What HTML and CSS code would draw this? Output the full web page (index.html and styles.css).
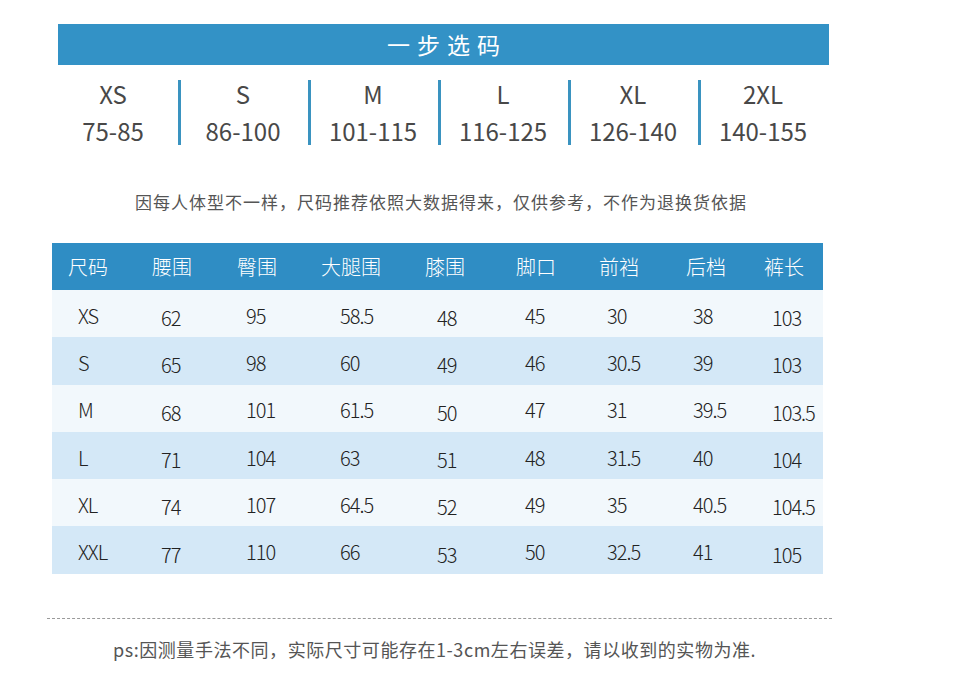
FILE: index.html
```html
<!DOCTYPE html>
<html lang="zh">
<head>
<meta charset="utf-8">
<link rel="stylesheet" href="styles.css">
</head>
<body>
<div class="page">
  <div class="banner">一步选码</div>
  <div class="sizes">
    <div class="size"><span>XS</span><span>75-85</span></div>
    <div class="size"><span>S</span><span>86-100</span></div>
    <div class="size"><span>M</span><span>101-115</span></div>
    <div class="size"><span>L</span><span>116-125</span></div>
    <div class="size"><span>XL</span><span>126-140</span></div>
    <div class="size"><span>2XL</span><span>140-155</span></div>
  </div>
  <p class="note">因每人体型不一样，尺码推荐依照大数据得来，仅供参考，不作为退换货依据</p>
  <div class="table">
    <div class="row head"><span>尺码</span><span>腰围</span><span>臀围</span><span>大腿围</span><span>膝围</span><span>脚口</span><span>前裆</span><span>后档</span><span>裤长</span></div>
    <div class="row light"><span>XS</span><span>62</span><span>95</span><span>58.5</span><span>48</span><span>45</span><span>30</span><span>38</span><span>103</span></div>
    <div class="row dark"><span>S</span><span>65</span><span>98</span><span>60</span><span>49</span><span>46</span><span>30.5</span><span>39</span><span>103</span></div>
    <div class="row light"><span>M</span><span>68</span><span>101</span><span>61.5</span><span>50</span><span>47</span><span>31</span><span>39.5</span><span>103.5</span></div>
    <div class="row dark"><span>L</span><span>71</span><span>104</span><span>63</span><span>51</span><span>48</span><span>31.5</span><span>40</span><span>104</span></div>
    <div class="row light"><span>XL</span><span>74</span><span>107</span><span>64.5</span><span>52</span><span>49</span><span>35</span><span>40.5</span><span>104.5</span></div>
    <div class="row dark"><span>XXL</span><span>77</span><span>110</span><span>66</span><span>53</span><span>50</span><span>32.5</span><span>41</span><span>105</span></div>
  </div>
  <div class="rule"></div>
  <p class="ps">ps:因测量手法不同，实际尺寸可能存在1-3cm左右误差，请以收到的实物为准.</p>
</div>
</body>
</html>
```
FILE: styles.css
```css
* { box-sizing: border-box; }
html, body { margin: 0; padding: 0; background: #fff; }
body {
  width: 976px;
  height: 697px;
  overflow: hidden;
  font-family: "Noto Sans CJK SC", "Noto Sans", sans-serif;
}
.page {
  padding-top: 24px;
  display: flex;
  flex-direction: column;
}
.banner {
  margin-left: 58px;
  width: 771px;
  height: 41px;
  background: #3392c6;
  color: #fff;
  font-size: 23px;
  letter-spacing: 7px;
  text-indent: 7px;
  line-height: 41px;
  text-align: center;
}
.sizes {
  margin-top: 15px;
  margin-left: 48px;
  display: grid;
  grid-template-columns: repeat(6, 130px);
  grid-template-rows: 65px;
  height: 65px;
}
.size {
  display: flex;
  flex-direction: column;
  align-items: center;
  font-size: 24px;
  color: #484848;
  height: 65px;
}
.size span:first-child { line-height: 28px; }
.size span:last-child { line-height: 37px; margin-top: 4px; }
.size + .size {
  border-left: 3px solid #3a93c0;
  padding-right: 3px;
}
.note {
  margin: 45px 0 0;
  text-align: center;
  font-size: 17px;
  letter-spacing: 1px;
  line-height: 24px;
  color: #555;
  padding-right: 94px;
}
.table {
  margin-top: 29px;
  margin-left: 52px;
  width: 771px;
  display: flex;
  flex-direction: column;
}
.row {
  display: grid;
  grid-template-columns: 90px 85px 84px 104px 91px 83px 87px 78px 69px;
  height: 47.3px;
  align-items: center;
  font-size: 20px;
  font-weight: 300;
  letter-spacing: -1px;
  color: #222;
}
.row span { padding-top: 3px; }
.row span:nth-child(1) { padding-left: 26px; }
.row span:nth-child(2) { padding-left: 19px; padding-top: 8px; }
.row span:nth-child(3) { padding-left: 19px; }
.row span:nth-child(4) { padding-left: 29px; }
.row span:nth-child(5) { padding-left: 22px; padding-top: 8px; }
.row span:nth-child(6) { padding-left: 19px; }
.row span:nth-child(7) { padding-left: 18px; }
.row span:nth-child(8) { padding-left: 17px; }
.row span:nth-child(9) { padding-left: 18px; padding-top: 8px; }
.row.head {
  height: 47px;
  background: #2f8dc4;
  color: #fff;
  letter-spacing: 0;
  font-weight: 300;
}
.row.head span { padding-left: 10px; padding-top: 0; }
.row.head span:first-child { padding-left: 16px; }
.row.light { background: #f2f8fc; }
.row.dark { background: #d4e8f7; }
.rule {
  margin-top: 44px;
  margin-left: 47px;
  width: 785px;
  border-top: 1px dashed #9a9a9a;
}
.ps {
  margin: 18px 0 0;
  padding-left: 113px;
  font-size: 18px;
  letter-spacing: 0.55px;
  line-height: 24px;
  color: #555;
}
```
